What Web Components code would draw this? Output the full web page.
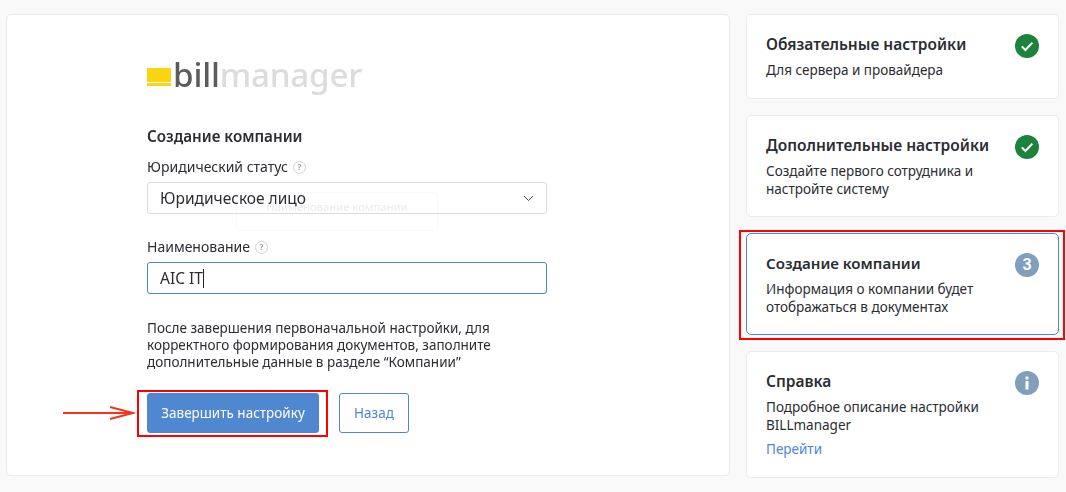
<!DOCTYPE html>
<html lang="ru">
<head>
<meta charset="utf-8">
<title>BILLmanager</title>
<style>
  html, body { margin: 0; height: 100%; }
  body { background: #f9f9f9; font-family: "Noto Sans", sans-serif; color: #2b2d33; }
</style>
</head>
<body>
<setup-page>
  <setup-form slot="main"></setup-form>
  <step-card slot="side" title="Обязательные настройки" status="done">Для сервера и провайдера</step-card>
  <step-card slot="side" title="Дополнительные настройки" status="done">Создайте первого сотрудника и<br>настройте систему</step-card>
  <step-card slot="side" title="Создание компании" status="3" active>Информация о компании будет<br>отображаться в документах</step-card>
  <step-card slot="side" title="Справка" status="info" link="Перейти">Подробное описание настройки<br>BILLmanager</step-card>
</setup-page>

<script>
class SetupPage extends HTMLElement {
  constructor() {
    super();
    this.attachShadow({mode: "open"}).innerHTML = `
    <style>
      :host { display: flex; gap: 16px; padding: 14px 7px 0 6px; box-sizing: border-box; width: 1066px; height: 492px; overflow: hidden; }
      .main { width: 724px; flex: none; }
      .side { display: flex; flex-direction: column; gap: 16px; width: 313px; flex: none; }
    </style>
    <div class="main"><slot name="main"></slot></div>
    <div class="side"><slot name="side"></slot></div>`;
  }
}
customElements.define("setup-page", SetupPage);

class HelpMark extends HTMLElement {
  constructor() {
    super();
    this.attachShadow({mode: "open"}).innerHTML = `
    <style>
      :host { display: inline-flex; align-items: center; justify-content: center; width: 13px; height: 13px; box-sizing: border-box;
        border: 1px solid #d4d4d4; border-radius: 50%; color: #a3a3a3; font-size: 8px; font-weight: 700; line-height: 1; margin-left: 5px; }
    </style>?`;
  }
}
customElements.define("help-mark", HelpMark);

class BillLogo extends HTMLElement {
  constructor() {
    super();
    this.attachShadow({mode: "open"}).innerHTML = `
    <style>
      :host { display: flex; align-items: flex-start; height: 36px; }
      .mark { display: flex; flex-direction: column; gap: 1px; width: 24px; margin-top: 7px; margin-right: 2px; flex: none; }
      .mark i { display: block; background: #fad411; }
      .mark i:first-child { height: 14px; }
      .mark i:last-child { height: 3px; }
      .text { font: 500 33.2px/36px "Noto Sans", sans-serif; letter-spacing: -.2px; color: #dcdcdc; white-space: nowrap; margin-top: -4px; }
      b { font-weight: 500; color: #5c5c5c; }
    </style>
    <div class="mark"><i></i><i></i></div>
    <div class="text"><b>bill</b>manager</div>`;
  }
}
customElements.define("bill-logo", BillLogo);

class FormField extends HTMLElement {
  constructor() {
    super();
    const focus = this.hasAttribute("focused");
    this.attachShadow({mode: "open"}).innerHTML = `
    <style>
      :host { display: block; width: 400px; }
      .label { display: flex; align-items: center; height: 18px; font-size: 14px; line-height: 18px; color: #2b2d33; margin-bottom: 6px; }
      .box { display: flex; align-items: center; justify-content: space-between; box-sizing: border-box; height: 32px; padding: 0 12px;
        background: #fff; border: 1px solid ${focus ? "#4a86cf" : "#dcdcdc"}; border-radius: 3px; font-size: 15.5px; color: #2b2d33; }
      .caret { display: inline-block; width: 1px; height: 19px; background: #222; vertical-align: -4px; }
      svg { display: block; }
    </style>
    <div class="label">${this.getAttribute("label")}<help-mark></help-mark></div>
    <div class="box">
      <span><slot></slot>${focus ? '<span class="caret"></span>' : ""}</span>
      ${this.hasAttribute("select") ? '<svg width="11" height="7" viewBox="0 0 11 7"><path d="M1 1l4.5 4.5L10 1" fill="none" stroke="#444" stroke-width="1"/></svg>' : ""}
    </div>`;
  }
}
customElements.define("form-field", FormField);

class ActionButton extends HTMLElement {
  constructor() {
    super();
    const primary = this.hasAttribute("primary");
    this.attachShadow({mode: "open"}).innerHTML = `
    <style>
      :host { display: inline-flex; align-items: center; justify-content: center; box-sizing: border-box; height: 40px; border-radius: 3px;
        font-size: 13.5px; border: 1px solid #4f87d0; background: ${primary ? "#4f87d0" : "#fff"}; color: ${primary ? "#fff" : "#4f87d0"}; }
    </style>
    <slot></slot>`;
  }
}
customElements.define("action-button", ActionButton);

class SetupForm extends HTMLElement {
  constructor() {
    super();
    this.attachShadow({mode: "open"}).innerHTML = `
    <style>
      :host { display: block; position: relative; box-sizing: border-box; width: 724px; height: 462px; padding: 46px 0 0 140px;
        background: #fff; border: 1px solid #ececec; border-radius: 5px; }
      h2 { margin: 29px 0 12px; font-size: 15.2px; line-height: 20px; font-weight: 600; color: #2b2d33; }
      form-field + form-field { margin-top: 24px; }
      p { margin: 26px 0 0; width: 400px; font-size: 13.5px; line-height: 17px; color: #2b2d33; white-space: nowrap; }
      .actions { display: flex; gap: 20px; margin-top: 22px; }
      .finish { width: 172px; }
      .back { width: 70px; }
      .ghost { position: absolute; left: 229px; top: 177px; width: 202px; height: 39px; box-sizing: border-box; border: 1px solid #fafafa; border-radius: 4px;
        padding-top: 6px; text-align: center; font-size: 11.3px; line-height: 16px; color: #ececec; mix-blend-mode: multiply; }
      .hl { position: absolute; box-sizing: border-box; border: 2px solid #f00; left: 130px; top: 375px; width: 191px; height: 47px; }
      .arrow { position: absolute; left: 56px; top: 391px; }
    </style>
    <bill-logo></bill-logo>
    <h2>Создание компании</h2>
    <form-field label="Юридический статус" select>Юридическое лицо</form-field>
    <form-field label="Наименование" focused>AIC IT</form-field>
    <p>После завершения первоначальной настройки, для<br>корректного формирования документов, заполните<br>дополнительные данные в разделе “Компании”</p>
    <div class="actions">
      <action-button class="finish" primary>Завершить настройку</action-button>
      <action-button class="back">Назад</action-button>
    </div>
    <div class="ghost">Наименование компании</div>
    <div class="hl"></div>
    <svg class="arrow" width="72" height="14" viewBox="0 0 72 14"><path d="M0 7H69" stroke="#f5341c" stroke-width="2" fill="none"/><path d="M47 1L70 7 47 13" stroke="#f5341c" stroke-width="2" fill="none"/></svg>`;
  }
}
customElements.define("setup-form", SetupForm);

class StepCard extends HTMLElement {
  constructor() {
    super();
    const status = this.getAttribute("status");
    const active = this.hasAttribute("active");
    const link = this.getAttribute("link");
    let icon = "";
    if (status === "done") {
      icon = '<svg width="24" height="24" viewBox="0 0 24 24"><circle cx="12" cy="12" r="12" fill="#1d823b"/><path d="M6.8 12.4l3.6 3.6 7-7.4" fill="none" stroke="#fff" stroke-width="2"/></svg>';
    } else if (status === "info") {
      icon = '<svg width="24" height="24" viewBox="0 0 24 24"><circle cx="12" cy="12" r="12" fill="#7f9fbd"/><circle cx="12" cy="7" r="1.7" fill="#fff"/><rect x="10.5" y="10" width="3" height="8.5" fill="#fff"/></svg>';
    } else {
      icon = `<div class="num">${status}</div>`;
    }
    this.attachShadow({mode: "open"}).innerHTML = `
    <style>
      :host { display: block; position: relative; box-sizing: border-box; padding: 19px 19px 0; background: #fff; border: 1px solid #ececec; border-radius: 5px; }
      :host([active]) { border-color: #4f87d0; }
      .top { display: flex; justify-content: space-between; align-items: flex-start; gap: 8px; }
      h3 { margin: 0; font-size: 15.5px; line-height: 20px; font-weight: 600; color: #2b2d33; white-space: nowrap; }
      :host([active]) h3 { font-size: 15.1px; }
      .text { margin-top: 3px; font-size: 13.5px; line-height: 18px; color: #2b2d33; }
      .icon { flex: none; width: 24px; height: 24px; }
      .icon svg { display: block; }
      .num { width: 24px; height: 24px; border-radius: 50%; background: #7f9fbd; color: #fff; font: 700 16px/24px Roboto, sans-serif; text-align: center; }
      a { display: block; margin-top: 6px; font-size: 13.5px; line-height: 18px; color: #4f87d0; text-decoration: none; }
      .hl { position: absolute; left: -8px; right: -7px; top: -4px; bottom: -6px; border: 2px solid #f00; }
    </style>
    <div class="top"><h3>${this.getAttribute("title")}</h3><div class="icon">${icon}</div></div>
    <div class="text"><slot></slot></div>
    ${link ? `<a href="#">${link}</a>` : ""}
    ${active ? '<div class="hl"></div>' : ""}`;
    this.style.height = {"Обязательные настройки": "85px", "Дополнительные настройки": "102px", "Создание компании": "102px", "Справка": "127px"}[this.getAttribute("title")];
  }
}
customElements.define("step-card", StepCard);
</script>
</body>
</html>
